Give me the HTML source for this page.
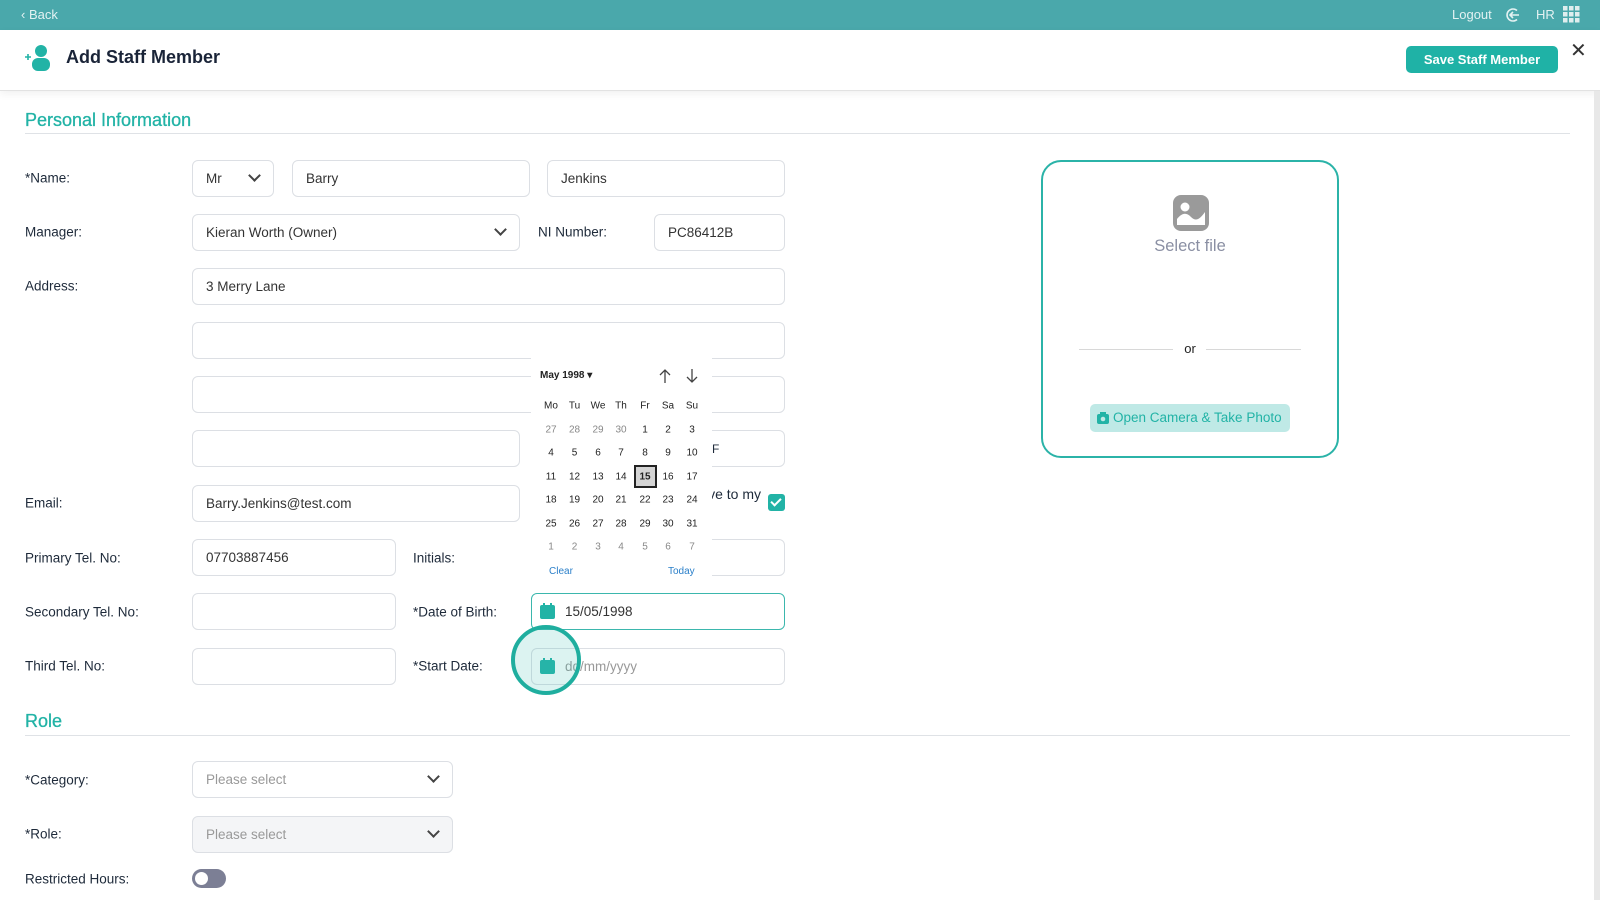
<!DOCTYPE html>
<html><head><meta charset="utf-8"><style>
*{box-sizing:border-box;margin:0;padding:0}
body{width:1600px;height:900px;overflow:hidden;background:#fff;font-family:"Liberation Sans",sans-serif;color:#1e2a3a;position:relative}
.a{position:absolute}
.top{left:0;top:0;width:1600px;height:30px;background:#4aa8ab;color:#e3f2f2;font-size:13px}
.hdr{left:0;top:30px;width:1600px;height:61px;background:#fff;border-bottom:1px solid #e2e2e2;box-shadow:0 3px 8px rgba(0,0,0,.06)}
.lbl{font-size:13.5px;color:#1e2a3a;left:25px;transform:translateY(-50%)}
.in{height:37px;border:1px solid #dcdfe4;border-radius:6px;background:#fff;font-size:13.5px;color:#333;padding-left:13px;line-height:35px}
.sec{font-size:18px;color:#22b3a6;left:25px;-webkit-text-stroke:0.3px #22b3a6}
.line{height:1px;background:#dfe2e6;left:25px;width:1545px}
.chev{position:absolute;right:14px;width:9px;height:9px;border-right:2px solid #444;border-bottom:2px solid #444;transform:rotate(45deg);top:10px}
.cal{left:531px;top:357px;width:181px;height:225px;background:#fff;font-size:10px;color:#222}
.cal span{position:absolute;width:22px;text-align:center;transform:translate(-50%,-50%)}
.g{color:#888}
</style></head><body>
<div class="a top">
 <div class="a" style="left:21px;top:7px">‹ Back</div>
 <div class="a" style="left:1452px;top:7px">Logout</div>
 <svg class="a" style="left:1505px;top:7px" width="16" height="16" viewBox="0 0 16 16" fill="none" stroke="#e3f2f2" stroke-width="1.6"><path d="M12 3.5A6 6 0 1 0 12 12.5"/><path d="M14 8H5M8 5L5 8l3 3"/></svg>
 <div class="a" style="left:1536px;top:7px">HR</div>
 <svg class="a" style="left:1563px;top:6px" width="17" height="17" viewBox="0 0 17 17" fill="#dfeeee"><rect x="0" y="0" width="4.5" height="4.5"/><rect x="6" y="0" width="4.5" height="4.5"/><rect x="12" y="0" width="4.5" height="4.5"/><rect x="0" y="6" width="4.5" height="4.5"/><rect x="6" y="6" width="4.5" height="4.5"/><rect x="12" y="6" width="4.5" height="4.5"/><rect x="0" y="12" width="4.5" height="4.5"/><rect x="6" y="12" width="4.5" height="4.5"/><rect x="12" y="12" width="4.5" height="4.5"/></svg>
</div>
<div class="a hdr">
 <svg class="a" style="left:24px;top:14px" width="28" height="28" viewBox="0 0 28 28" fill="#22b3a6"><circle cx="17" cy="7" r="6"/><rect x="8" y="14" width="18" height="13" rx="6"/><path d="M1 13h6M4 10v6" stroke="#22b3a6" stroke-width="1.6"/></svg>
 <div class="a" style="left:66px;top:17px;font-size:18px;font-weight:bold;color:#1a2438">Add Staff Member</div>
 <div class="a" style="left:1406px;top:16px;width:152px;height:27px;background:#1fb2a6;border-radius:5px;color:#fff;font-size:13px;font-weight:bold;text-align:center;line-height:27px">Save Staff Member</div>
 <div class="a" style="left:1570px;top:8px;font-size:20px;color:#333">✕</div>
</div>
<div class="a" style="left:1594px;top:91px;width:6px;height:809px;background:#e8e8e8"></div>

<div class="a sec" style="top:110px">Personal Information</div>
<div class="a line" style="top:133px"></div>

<div class="a lbl" style="top:178px">*Name:</div>
<div class="a in" style="left:192px;top:160px;width:82px">Mr<div class="chev"></div></div>
<div class="a in" style="left:292px;top:160px;width:238px">Barry</div>
<div class="a in" style="left:547px;top:160px;width:238px">Jenkins</div>

<div class="a lbl" style="top:232px">Manager:</div>
<div class="a in" style="left:192px;top:214px;width:328px">Kieran Worth (Owner)<div class="chev"></div></div>
<div class="a lbl" style="left:538px;top:232px">NI Number:</div>
<div class="a in" style="left:654px;top:214px;width:131px">PC86412B</div>

<div class="a lbl" style="top:286px">Address:</div>
<div class="a in" style="left:192px;top:268px;width:593px">3 Merry Lane</div>
<div class="a in" style="left:192px;top:322px;width:593px"></div>
<div class="a in" style="left:192px;top:376px;width:593px"></div>
<div class="a in" style="left:192px;top:430px;width:328px"></div>
<div class="a in" style="left:547px;top:430px;width:238px"></div>
<div class="a" style="left:712px;top:442px;font-size:12px">F</div>

<div class="a lbl" style="top:503px">Email:</div>
<div class="a in" style="left:192px;top:485px;width:328px">Barry.Jenkins@test.com</div>
<div class="a" style="right:839px;top:486px;font-size:14px;white-space:nowrap">Send copy of above to my</div>
<div class="a" style="left:768px;top:494px;width:17px;height:17px;background:#22b3a6;border-radius:3px"><div class="a" style="left:5px;top:2px;width:6px;height:10px;border-right:2px solid #fff;border-bottom:2px solid #fff;transform:rotate(45deg)"></div></div>

<div class="a lbl" style="top:558px">Primary Tel. No:</div>
<div class="a in" style="left:192px;top:539px;width:204px">07703887456</div>
<div class="a lbl" style="left:413px;top:558px">Initials:</div>
<div class="a in" style="left:531px;top:539px;width:254px"></div>

<div class="a lbl" style="top:612px">Secondary Tel. No:</div>
<div class="a in" style="left:192px;top:593px;width:204px"></div>
<div class="a lbl" style="left:413px;top:612px">*Date of Birth:</div>
<div class="a in" style="left:531px;top:593px;width:254px;border-color:#3bb7ad;padding-left:33px">15/05/1998</div>
<svg class="a" style="left:540px;top:603px" width="15" height="16" viewBox="0 0 15 16" fill="#22b3a6"><rect x="0" y="2" width="15" height="14" rx="2"/><rect x="3" y="0" width="2" height="4"/><rect x="10" y="0" width="2" height="4"/></svg>

<div class="a lbl" style="top:666px">Third Tel. No:</div>
<div class="a in" style="left:192px;top:648px;width:204px"></div>
<div class="a lbl" style="left:413px;top:666px">*Start Date:</div>
<div class="a in" style="left:531px;top:648px;width:254px;padding-left:33px;color:#999">dd/mm/yyyy</div>
<svg class="a" style="left:540px;top:658px" width="15" height="16" viewBox="0 0 15 16" fill="#22b3a6"><rect x="0" y="2" width="15" height="14" rx="2"/><rect x="3" y="0" width="2" height="4"/><rect x="10" y="0" width="2" height="4"/></svg>
<div class="a" style="left:511px;top:625px;width:70px;height:70px;border-radius:50%;border:4px solid #1fae9f;background:rgba(60,190,180,.18)"></div>

<div class="a cal">
 <div class="a" style="left:9px;top:13px;font-weight:bold;font-size:10px">May 1998 ▾</div>
 <svg class="a" style="left:127px;top:11px" width="14" height="16" viewBox="0 0 14 16" fill="none" stroke="#444" stroke-width="1.3"><path d="M7 15V2M2 7l5-5 5 5"/></svg>
 <svg class="a" style="left:154px;top:11px" width="14" height="16" viewBox="0 0 14 16" fill="none" stroke="#444" stroke-width="1.3"><path d="M7 1v13M2 9l5 5 5-5"/></svg>
 <div class="a" style="left:103px;top:108px;width:23px;height:23px;background:#d4d4d4;border:2px solid #222"></div>
 <span style="left:20px;top:49px">Mo</span><span style="left:43.5px;top:49px">Tu</span><span style="left:67px;top:49px">We</span><span style="left:90px;top:49px">Th</span><span style="left:114px;top:49px">Fr</span><span style="left:137px;top:49px">Sa</span><span style="left:161px;top:49px">Su</span>
 <span class="g" style="left:20px;top:73px">27</span><span class="g" style="left:43.5px;top:73px">28</span><span class="g" style="left:67px;top:73px">29</span><span class="g" style="left:90px;top:73px">30</span><span style="left:114px;top:73px">1</span><span style="left:137px;top:73px">2</span><span style="left:161px;top:73px">3</span>
 <span style="left:20px;top:96px">4</span><span style="left:43.5px;top:96px">5</span><span style="left:67px;top:96px">6</span><span style="left:90px;top:96px">7</span><span style="left:114px;top:96px">8</span><span style="left:137px;top:96px">9</span><span style="left:161px;top:96px">10</span>
 <span style="left:20px;top:119.5px">11</span><span style="left:43.5px;top:119.5px">12</span><span style="left:67px;top:119.5px">13</span><span style="left:90px;top:119.5px">14</span><span style="left:114px;top:119.5px;font-weight:bold">15</span><span style="left:137px;top:119.5px">16</span><span style="left:161px;top:119.5px">17</span>
 <span style="left:20px;top:143px">18</span><span style="left:43.5px;top:143px">19</span><span style="left:67px;top:143px">20</span><span style="left:90px;top:143px">21</span><span style="left:114px;top:143px">22</span><span style="left:137px;top:143px">23</span><span style="left:161px;top:143px">24</span>
 <span style="left:20px;top:166.5px">25</span><span style="left:43.5px;top:166.5px">26</span><span style="left:67px;top:166.5px">27</span><span style="left:90px;top:166.5px">28</span><span style="left:114px;top:166.5px">29</span><span style="left:137px;top:166.5px">30</span><span style="left:161px;top:166.5px">31</span>
 <span class="g" style="left:20px;top:190px">1</span><span class="g" style="left:43.5px;top:190px">2</span><span class="g" style="left:67px;top:190px">3</span><span class="g" style="left:90px;top:190px">4</span><span class="g" style="left:114px;top:190px">5</span><span class="g" style="left:137px;top:190px">6</span><span class="g" style="left:161px;top:190px">7</span>
 <div class="a" style="left:18px;top:209px;color:#2a7fc9">Clear</div>
 <div class="a" style="left:137px;top:209px;color:#2a7fc9">Today</div>
</div>

<div class="a" style="left:1041px;top:160px;width:298px;height:298px;border:2px solid #2bb3a8;border-radius:20px">
 <svg class="a" style="left:130px;top:33px" width="36" height="36" viewBox="0 0 36 36"><rect width="36" height="36" rx="8" fill="#9a9a9a"/><circle cx="12" cy="12" r="4.5" fill="#fff"/><path d="M4 30V24c5-6 9-7 14-2s9 2 14-5v13z" fill="#fff"/></svg>
 <div class="a" style="left:0;width:294px;top:75px;text-align:center;font-size:16.5px;color:#8a8fa3">Select file</div>
 <div class="a" style="left:36px;top:187px;width:94px;height:1px;background:#d8d8d8"></div>
 <div class="a" style="left:163px;top:187px;width:95px;height:1px;background:#d8d8d8"></div>
 <div class="a" style="left:0;width:294px;top:179px;text-align:center;font-size:13px;color:#222">or</div>
 <div class="a" style="left:47px;top:242px;width:200px;height:28px;background:#bfe9e6;border-radius:5px;color:#22b3a6;font-size:13.5px;line-height:28px;padding-left:23px">Open Camera &amp; Take Photo</div>
 <svg class="a" style="left:54px;top:250px" width="12" height="12" viewBox="0 0 12 12" fill="#22b3a6"><rect x="0" y="2" width="12" height="10" rx="2"/><rect x="3" y="0" width="6" height="2"/><circle cx="6" cy="7" r="2.3" fill="#bfe9e6"/></svg>
</div>

<div class="a sec" style="top:711px">Role</div>
<div class="a line" style="top:735px"></div>
<div class="a lbl" style="top:780px">*Category:</div>
<div class="a in" style="left:192px;top:761px;width:261px;color:#999">Please select<div class="chev"></div></div>
<div class="a lbl" style="top:834px">*Role:</div>
<div class="a in" style="left:192px;top:816px;width:261px;color:#999;background:#f4f5f7">Please select<div class="chev"></div></div>
<div class="a lbl" style="top:879px">Restricted Hours:</div>
<div class="a" style="left:192px;top:869px;width:34px;height:19px;border-radius:10px;background:#7c7f95"><div class="a" style="left:3px;top:3px;width:13px;height:13px;border-radius:50%;background:#fff"></div></div>
</body></html>
